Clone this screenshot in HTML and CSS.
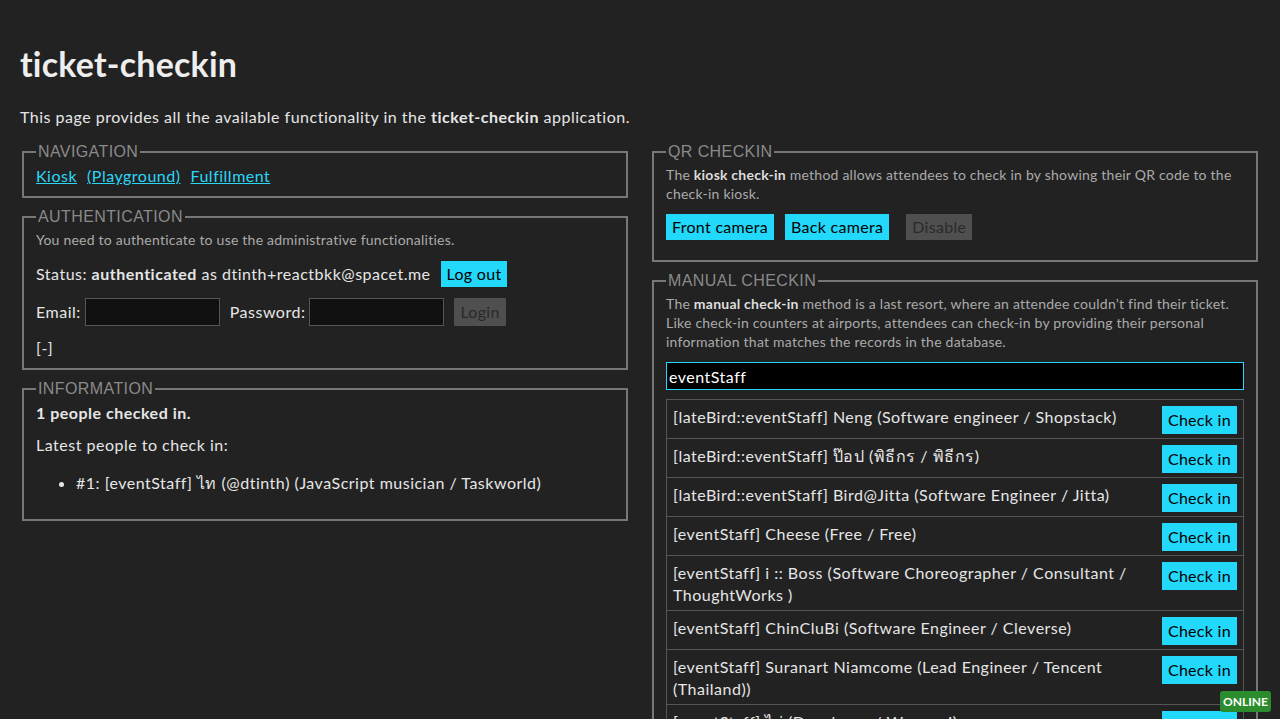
FILE: index.html
```html
<!DOCTYPE html>
<html lang="en">
<head>
<meta charset="utf-8">
<title>ticket-checkin</title>
<link rel="stylesheet" href="styles.css">
</head>
<body>
<div class="page">
  <h1 class="title">ticket-checkin</h1>
  <p class="intro">This page provides all the available functionality in the <strong>ticket-checkin</strong> application.</p>
  <div class="columns">
    <div class="column">
      <fieldset class="box">
        <legend class="box-legend">NAVIGATION</legend>
        <div class="nav-links">
          <a href="#" class="link">Kiosk</a>
          <a href="#" class="link">(Playground)</a>
          <a href="#" class="link">Fulfillment</a>
        </div>
      </fieldset>
      <fieldset class="box">
        <legend class="box-legend">AUTHENTICATION</legend>
        <p class="hint">You need to authenticate to use the administrative functionalities.</p>
        <div class="status-row">
          <span>Status: <strong>authenticated</strong> as dtinth+reactbkk@spacet.me</span>
          <button class="btn btn-primary">Log out</button>
        </div>
        <div class="login-row">
          <label class="field-label">Email:</label>
          <input class="field-input" type="text">
          <label class="field-label field-label-gap">Password:</label>
          <input class="field-input" type="password">
          <button class="btn btn-disabled btn-login">Login</button>
        </div>
        <div class="toggle">[-]</div>
      </fieldset>
      <fieldset class="box">
        <legend class="box-legend">INFORMATION</legend>
        <p class="info-count"><strong>1 people checked in.</strong></p>
        <p class="info-latest">Latest people to check in:</p>
        <ul class="info-list">
          <li>#1: [eventStaff] ไท (@dtinth) (JavaScript musician / Taskworld)</li>
        </ul>
      </fieldset>
    </div>
    <div class="column">
      <fieldset class="box">
        <legend class="box-legend">QR CHECKIN</legend>
        <p class="hint hint-block">The <strong>kiosk check-in</strong> method allows attendees to check in by showing their QR code to the check-in kiosk.</p>
        <div class="camera-row">
          <button class="btn btn-primary">Front camera</button>
          <button class="btn btn-primary">Back camera</button>
          <button class="btn btn-disabled">Disable</button>
        </div>
      </fieldset>
      <fieldset class="box">
        <legend class="box-legend">MANUAL CHECKIN</legend>
        <p class="hint hint-block">The <strong>manual check-in</strong> method is a last resort, where an attendee couldn’t find their ticket. Like check-in counters at airports, attendees can check-in by providing their personal information that matches the records in the database.</p>
        <input class="search-input" type="text" value="eventStaff">
        <div class="results">
          <div class="result-row"><div class="result-text">[lateBird::eventStaff] Neng (Software engineer / Shopstack)</div><button class="btn btn-primary btn-check">Check in</button></div>
          <div class="result-row"><div class="result-text">[lateBird::eventStaff] ป๊อป (พิธีกร / พิธีกร)</div><button class="btn btn-primary btn-check">Check in</button></div>
          <div class="result-row"><div class="result-text">[lateBird::eventStaff] Bird@Jitta (Software Engineer / Jitta)</div><button class="btn btn-primary btn-check">Check in</button></div>
          <div class="result-row"><div class="result-text">[eventStaff] Cheese (Free / Free)</div><button class="btn btn-primary btn-check">Check in</button></div>
          <div class="result-row"><div class="result-text">[eventStaff] i :: Boss (Software Choreographer / Consultant / ThoughtWorks )</div><button class="btn btn-primary btn-check">Check in</button></div>
          <div class="result-row"><div class="result-text">[eventStaff] ChinCluBi (Software Engineer / Cleverse)</div><button class="btn btn-primary btn-check">Check in</button></div>
          <div class="result-row"><div class="result-text">[eventStaff] Suranart Niamcome (Lead Engineer / Tencent (Thailand))</div><button class="btn btn-primary btn-check">Check in</button></div>
          <div class="result-row"><div class="result-text">[eventStaff] ไผ่ (Developer / Wongnai)</div><button class="btn btn-primary btn-check">Check in</button></div>
        </div>
      </fieldset>
    </div>
  </div>
</div>
<div class="online-badge">ONLINE</div>
</body>
</html>
```

FILE: styles.css
```css
html, body {
  margin: 0;
  padding: 0;
  background: #222222;
}
body {
  color: #e6e6e6;
  font-family: "Lato", "Noto Sans", sans-serif;
  font-size: 16px;
  line-height: 22px;
  letter-spacing: 0.5px;
}
.page {
  padding: 43px 20px 20px;
}
.title {
  margin: 0;
  font-size: 34px;
  line-height: 42px;
  font-weight: 700;
  letter-spacing: 0.2px;
  color: #eeeeee;
}
.intro {
  margin: 20px 0 14px;
  line-height: 24px;
}
.columns {
  display: grid;
  grid-template-columns: 1fr 1fr;
  column-gap: 20px;
  align-items: start;
}
.box {
  margin: 0 2px 10px;
  padding: 4px 12px 9px;
  border: 2px solid #777777;
  min-width: 0;
}
.box-legend {
  padding: 0 2px;
  font-family: "Liberation Sans", Arial, sans-serif;
  font-size: 16px;
  line-height: 18px;
  letter-spacing: 0.4px;
  color: #8a8a8a;
}
.nav-links {
  display: flex;
  gap: 10px;
}
.link {
  color: #2ad6f8;
  text-decoration: underline;
}
.hint {
  margin: 0;
  font-size: 14px;
  line-height: 20px;
  letter-spacing: 0.23px;
  color: #aaaaaa;
}
.hint strong {
  color: #dddddd;
}
.hint-block {
  line-height: 19px;
}
.status-row {
  margin-top: 11px;
  display: flex;
  align-items: center;
  gap: 10px;
  line-height: 26px;
}
.btn {
  font-family: inherit;
  font-size: 16px;
  line-height: 20px;
  letter-spacing: 0.3px;
  padding: 3px 6px;
  border: 0;
  border-radius: 0;
  margin: 0;
}
.btn-primary {
  background: #22d8fb;
  color: #000000;
}
.btn-disabled {
  background: #4f4f4f;
  color: #2a2a2a;
}
.login-row {
  margin-top: 11px;
  display: flex;
  align-items: center;
}
.field-label {
  margin-right: 4px;
}
.field-label-gap {
  margin-left: 10px;
}
.field-input {
  width: 135px;
  height: 28px;
  box-sizing: border-box;
  background: #111111;
  border: 1px solid #555555;
  color: #eeeeee;
  padding: 0 4px;
}
.btn-login {
  margin-left: 10px;
  height: 28px;
}
.toggle {
  margin-top: 11px;
}
.info-count {
  margin: 0 0 10px;
}
.info-latest {
  margin: 0;
}
.info-list {
  margin: 16px 0 16px;
  padding-left: 40px;
}
.camera-row {
  margin: 11px 0 11px;
  display: flex;
  gap: 11px;
}
.camera-row .btn-disabled {
  margin-left: 6px;
}
.search-input {
  display: block;
  width: 100%;
  box-sizing: border-box;
  height: 28px;
  margin-top: 11px;
  background: #000000;
  border: 1px solid #22d8fb;
  color: #ffffff;
  font-family: inherit;
  font-size: 16px;
  letter-spacing: 0.5px;
  padding: 0 2px;
  outline: none;
}
.results {
  margin-top: 9px;
  border: 1px solid #555555;
  border-bottom: 0;
}
.result-row {
  display: flex;
  align-items: flex-start;
  justify-content: space-between;
  gap: 8px;
  padding: 6px 6px 4px;
  border-bottom: 1px solid #555555;
}
.result-text {
  flex: 1;
  line-height: 22px;
  color: #e6e6e6;
}
.btn-check {
  height: 28px;
  flex: none;
}
.online-badge {
  position: fixed;
  right: 9px;
  bottom: 7px;
  background: #2a8c2c;
  color: #ffffff;
  font-family: "Lato", sans-serif;
  font-weight: 700;
  font-size: 12px;
  line-height: 15px;
  letter-spacing: 0;
  padding: 3px 3px;
  border-radius: 3px;
}
```
